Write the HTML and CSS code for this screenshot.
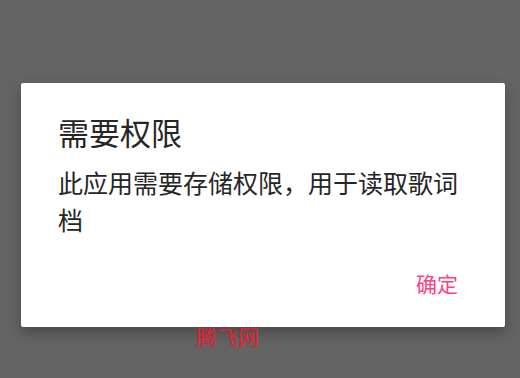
FILE: index.html
```html
<!DOCTYPE html>
<html lang="zh-CN">
<head>
<meta charset="utf-8">
<title>需要权限</title>
<link rel="stylesheet" href="styles.css">
</head>
<body>
<div class="dialog">
  <div class="title">需要权限</div>
  <div class="message">此应用需要存储权限，用于读取歌词档</div>
  <div class="actions"><span class="btn">确定</span></div>
</div>
<div class="watermark">腾飞网</div>
</body>
</html>
```
FILE: styles.css
```css
html, body {
  margin: 0;
  padding: 0;
  height: 100%;
}
body {
  background: #646464;
  font-family: "Noto Sans CJK SC", "Noto Sans", sans-serif;
  position: relative;
  overflow: hidden;
}
.dialog {
  margin: 83px 15px 0 21px;
  width: 484px;
  height: 244px;
  box-sizing: border-box;
  background: #fff;
  border-radius: 2px;
  box-shadow: 0 6px 14px rgba(0, 0, 0, 0.28);
  padding: 29px 47px 0 37px;
  display: flex;
  flex-direction: column;
}
.title {
  font-size: 31px;
  line-height: 40px;
  color: #262626;
}
.message {
  margin-top: 12px;
  font-size: 25px;
  line-height: 37px;
  color: #262626;
}
.actions {
  margin-top: 27px;
  display: flex;
  justify-content: flex-end;
}
.btn {
  font-size: 21px;
  line-height: 36px;
  color: #ff4081;
}
.watermark {
  position: absolute;
  left: 196px;
  top: 326px;
  font-size: 21px;
  line-height: 21px;
  color: #e0202c;
  font-weight: 400;
}
```
